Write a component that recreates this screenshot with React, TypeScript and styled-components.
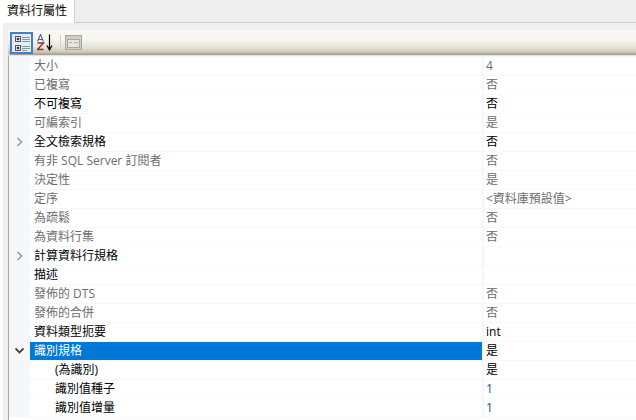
import React from 'react'
import styled, { createGlobalStyle } from 'styled-components'

const GlobalStyle = createGlobalStyle`
    html, body {
        margin: 0;
        padding: 0;
        background: #ffffff;
    }
    body {
        font-family: "Open Sans", "Noto Sans CJK TC", sans-serif;
    }
`;

const Page = styled.div`
    width: 636px;
    height: 420px;
    overflow: hidden;
    display: flex;
    flex-direction: column;
    background: #ffffff;
`;

const TabStrip = styled.div`
    height: 22px;
    display: flex;
    align-items: flex-end;
    background: #eeeeee;
    border-bottom: 1px solid #d0d0d0;
`;

const Tab = styled.div`
    width: 75px;
    height: 23px;
    margin-bottom: -1px;
    background: #ffffff;
    border-right: 1px solid #d0d0d0;
    box-sizing: border-box;
    padding-left: 7px;
    font-size: 12px;
    line-height: 22px;
    color: #000000;
`;

const Body = styled.div`
    flex: 1;
    display: flex;
    flex-direction: column;
    margin-left: 3px;
    padding: 7px 0 0 5px;
    background: #f0f0f0;
`;

const Toolbar = styled.div`
    height: 25px;
    display: flex;
    align-items: center;
    padding-left: 2px;
    border-bottom-left-radius: 3px;
    background: linear-gradient(#f9f8f3 0%, #f6f5ee 40%, #e6e4d6 68%, #cdcbb6 88%, #9c9a84 100%);
`;

const ToolButton = styled.div<{ $active?: boolean; $width: number }>`
    width: ${(p) => p.$width}px;
    height: 22px;
    margin-right: 1px;
    box-sizing: border-box;
    display: flex;
    align-items: center;
    justify-content: center;
    border: ${(p) => (p.$active ? '2px solid #3f7fcb' : 'none')};
    background: ${(p) => (p.$active ? '#e3edf8' : 'transparent')};
`;

const ToolSep = styled.div`
    width: 1px;
    height: 16px;
    margin: 0 3px 0 3px;
    background: #d4d4cc;
`;

const Grid = styled.div`
    flex: 1;
    background: #ffffff;
    border-left: 1px solid #a8a8a8;
    border-top: 1px solid #dfe3ec;
`;

const Row = styled.div`
    height: 19px;
    display: grid;
    grid-template-columns: 21px 452px 1fr;
`;

const Gutter = styled.div`
    display: flex;
    align-items: center;
    justify-content: center;
    background: #f5f7fb;
`;

const Cell = styled.div<{ $tone: string; $selected?: boolean; $indent?: boolean }>`
    box-sizing: border-box;
    height: 19px;
    padding-left: ${(p) => (p.$indent ? '25px' : '4px')};
    font-size: 12px;
    line-height: 18px;
    white-space: nowrap;
    overflow: hidden;
    color: ${(p) => (p.$selected ? '#ffffff' : p.$tone)};
    background: ${(p) => (p.$selected ? '#0078d7' : '#ffffff')};
    border-top: 1px solid #f5f7fb;
`;

const ValueCell = styled(Cell)`
    color: ${(p) => p.$tone};
    background: #ffffff;
    border-left: 2px solid #f5f7fb;
    padding-left: 2px;
`;

const GridEnd = styled.div`
    height: 1px;
    margin-left: 21px;
    background: #f5f7fb;
`;

const Chevron: React.FC<{ open?: boolean }> = ({ open }) => (
    <svg width="10" height="10" viewBox="0 0 10 10" fill="none">
        {open ? (
            <path d="M0.5 2.5 L4.5 6.5 L8.5 2.5" stroke="#444444" strokeWidth="1.8" />
        ) : (
            <path d="M2.5 1 L6.5 5 L2.5 9" stroke="#9a9a9a" strokeWidth="1.6" />
        )}
    </svg>
);

const CategorizedIcon = () => (
    <svg width="17" height="16" viewBox="0 0 17 16" fill="none">
        <rect x="2.5" y="1.5" width="5" height="5" fill="#fff" stroke="#555" />
        <path d="M3.5 4h3M5 2.5v3" stroke="#000" />
        <rect x="2.5" y="10.5" width="5" height="5" fill="#fff" stroke="#555" />
        <path d="M3.5 13h3M5 11.5v3" stroke="#000" />
        <path d="M9 2.5h8M9 4.5h8M9 6.5h8M9 11.5h8M9 13.5h8M9 15.5h5" stroke="#8a9a8a" />
    </svg>
);

const AlphaIcon = () => (
    <svg width="17" height="17" viewBox="0 0 17 17" fill="none">
        <path d="M0.5 7.5 L3.5 0.5 L6.5 7.5 M1.5 5.5 H5.5" stroke="#3c64b4" strokeWidth="1.1" />
        <path d="M0.5 9 H6.5 L0.5 15.5 H6.5" stroke="#8a3030" strokeWidth="1.3" />
        <path d="M12.5 0.5 V15 M10 11.5 L12.5 16 L15 11.5" stroke="#000" strokeWidth="1.2" />
    </svg>
);

const PagesIcon = () => (
    <svg width="17" height="15" viewBox="0 0 17 15" fill="none">
        <rect x="0.5" y="0.5" width="16" height="14" fill="#cfcfc8" stroke="#a8a8a0" />
        <rect x="2.5" y="4.5" width="12" height="8" fill="#e6e6e0" stroke="#a8a8a0" />
        <path d="M4 7.5h3M9 7.5h4" stroke="#b0b0a8" />
    </svg>
);

type RowData = {
    name: string;
    value: string;
    tone: 'gray' | 'black';
    valueTone?: string;
    chevron?: 'closed' | 'open';
    selected?: boolean;
    indent?: boolean;
};

const rows: RowData[] = [
    { name: '大小', value: '4', tone: 'gray' },
    { name: '已複寫', value: '否', tone: 'gray' },
    { name: '不可複寫', value: '否', tone: 'black' },
    { name: '可編索引', value: '是', tone: 'gray' },
    { name: '全文檢索規格', value: '否', tone: 'black', chevron: 'closed' },
    { name: '有非 SQL Server 訂閱者', value: '否', tone: 'gray' },
    { name: '決定性', value: '是', tone: 'gray' },
    { name: '定序', value: '<資料庫預設值>', tone: 'gray' },
    { name: '為疏鬆', value: '否', tone: 'gray' },
    { name: '為資料行集', value: '否', tone: 'gray' },
    { name: '計算資料行規格', value: '', tone: 'black', chevron: 'closed' },
    { name: '描述', value: '', tone: 'black' },
    { name: '發佈的 DTS', value: '否', tone: 'gray' },
    { name: '發佈的合併', value: '否', tone: 'gray' },
    { name: '資料類型扼要', value: 'int', tone: 'black' },
    { name: '識別規格', value: '是', tone: 'black', chevron: 'open', selected: true },
    { name: '(為識別)', value: '是', tone: 'black', indent: true },
    { name: '識別值種子', value: '1', tone: 'black', indent: true, valueTone: '#12509c' },
    { name: '識別值增量', value: '1', tone: 'black', indent: true, valueTone: '#12509c' },
];

const toneColor = { gray: '#6d6d6d', black: '#000000' };

const App: React.FC = () => {
    return (
        <>
            <GlobalStyle />
            <Page>
                <TabStrip>
                    <Tab>資料行屬性</Tab>
                </TabStrip>
                <Body>
                    <Toolbar>
                        <ToolButton $active $width={23}><CategorizedIcon /></ToolButton>
                        <ToolButton $width={22}><AlphaIcon /></ToolButton>
                        <ToolSep />
                        <ToolButton $width={18}><PagesIcon /></ToolButton>
                    </Toolbar>
                    <Grid>
                        {rows.map((row) => (
                            <Row key={row.name}>
                                <Gutter>
                                    {row.chevron && <Chevron open={row.chevron === 'open'} />}
                                </Gutter>
                                <Cell $tone={toneColor[row.tone]} $selected={row.selected} $indent={row.indent}>
                                    {row.name}
                                </Cell>
                                <ValueCell $tone={row.valueTone ?? toneColor[row.tone]}>
                                    {row.value}
                                </ValueCell>
                            </Row>
                        ))}
                        <GridEnd />
                    </Grid>
                </Body>
            </Page>
        </>
    )
}

export default App
